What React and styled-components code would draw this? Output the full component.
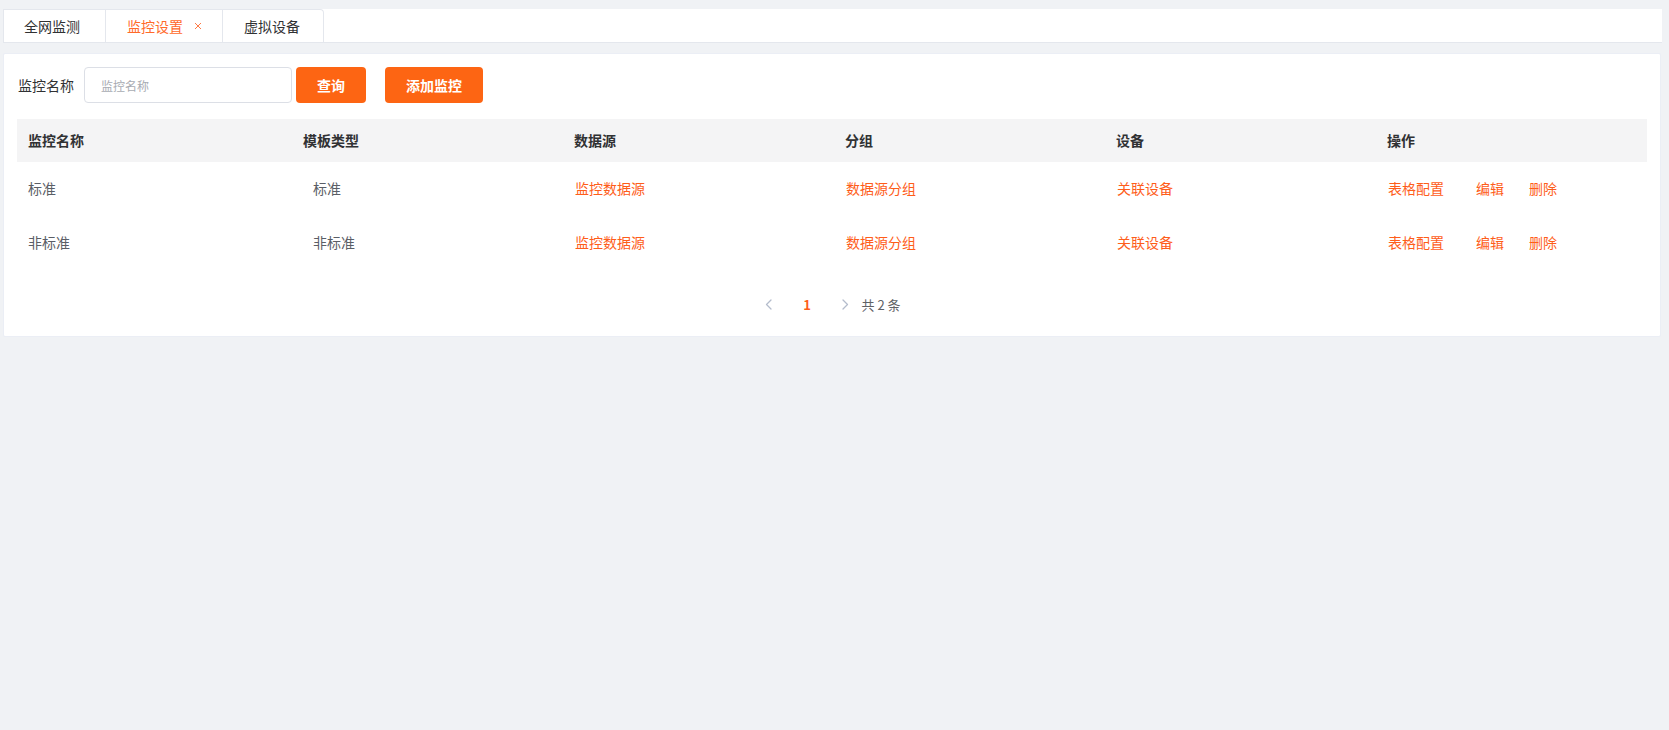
import React from "react";
import styled, { createGlobalStyle } from "styled-components";

const GlobalStyle = createGlobalStyle`
  html, body { margin: 0; padding: 0; height: 100%; background: #f0f2f5; }
  body { font-family: "Noto Sans CJK SC", "Noto Sans", sans-serif; font-size: 14px; color: #303133; }
  #root { min-height: 100%; }
  * { box-sizing: border-box; }
`;

const ORANGE = "#fd6513";
const LINK = "#fe5d1a";

const Page = styled.div`
  padding: 9px 7px 0 3px;
  min-height: 730px;
  background: #f0f2f5;
`;

const TabBar = styled.div`
  display: flex;
  height: 34px;
  background: #fff;
  border-bottom: 1px solid #e4e7ed;
`;

const TabNav = styled.div`
  display: flex;
  border: 1px solid #e4e7ed;
  border-bottom: none;
  border-radius: 0 4px 0 0;
`;

const Tab = styled.div`
  display: flex;
  align-items: center;
  height: 33px;
  padding: 0 ${(p) => p.$pr}px 1px ${(p) => p.$pl}px;
  border-left: ${(p) => (p.$first ? "none" : "1px solid #e4e7ed")};
  color: ${(p) => (p.$active ? "#ff6a2a" : "#303133")};
  font-size: 14px;
  line-height: 1;
  white-space: nowrap;
`;

const Close = styled.span`
  display: inline-flex;
  margin-left: 11px;
  width: 8px;
  height: 8px;
`;

const Card = styled.div`
  margin: 10px 1px 0 0;
  background: #fff;
  border: 1px solid #ebeef5;
  border-radius: 2px;
  padding: 13px 13px 18px 13px;
`;

const FormRow = styled.div`
  display: flex;
  align-items: center;
  height: 36px;
`;

const Label = styled.label`
  width: 67px;
  padding-left: 1px;
  font-size: 14px;
  color: #303133;
  white-space: nowrap;
`;

const Input = styled.input`
  width: 208px;
  height: 36px;
  border: 1px solid #dcdfe6;
  border-radius: 4px;
  padding: 0 16px;
  font-family: inherit;
  font-size: 12px;
  color: #606266;
  outline: none;
  &::placeholder { color: #a8abb2; }
`;

const Button = styled.button`
  height: 36px;
  width: ${(p) => p.$w}px;
  margin-left: ${(p) => p.$ml}px;
  border: none;
  border-radius: 4px;
  background: ${ORANGE};
  color: #fff;
  font-family: inherit;
  font-size: 14px;
  font-weight: 700;
  cursor: pointer;
  padding: 0;
`;

const Table = styled.div`
  margin-top: 16px;
  display: grid;
  grid-template-columns: 275px repeat(5, 1fr);
`;

const HeadCell = styled.div`
  height: 43px;
  display: flex;
  align-items: center;
  padding-left: 11px;
  padding-bottom: 1px;
  background: #f4f4f5;
  font-weight: 700;
  font-size: 14px;
  color: #303133;
`;

const Cell = styled.div`
  height: 54px;
  display: flex;
  align-items: center;
  padding-left: ${(p) => p.$pl || 12}px;
  padding-bottom: 2px;
  font-size: 14px;
  color: ${(p) => (p.$link ? LINK : "#5a5e66")};
`;

const Link = styled.span`
  color: ${LINK};
  margin-right: ${(p) => p.$mr || 0}px;
  cursor: pointer;
  white-space: nowrap;
`;

const Pager = styled.div`
  margin-top: 20px;
  height: 28px;
  display: flex;
  align-items: center;
  justify-content: center;
  padding-right: 10px;
`;

const PagerBtn = styled.span`
  width: 30px;
  height: 28px;
  display: flex;
  align-items: center;
  justify-content: center;
`;

const PageNum = styled.span`
  width: 31px;
  height: 28px;
  margin: 0 8px;
  display: flex;
  align-items: center;
  justify-content: center;
  color: ${LINK};
  font-weight: 700;
  font-size: 13px;
`;

const Total = styled.span`
  margin-left: 1px;
  font-size: 13px;
  color: #606266;
  white-space: nowrap;
`;

const Chevron = ({ dir }) => (
  <svg width="7" height="11" viewBox="0 0 7 11" fill="none">
    <path
      d={dir === "left" ? "M6 1 L1.5 5.5 L6 10" : "M1 1 L5.5 5.5 L1 10"}
      stroke="#b4bccc"
      strokeWidth="1.3"
      strokeLinecap="round"
      strokeLinejoin="round"
    />
  </svg>
);

const rows = [
  { name: "标准", type: "标准" },
  { name: "非标准", type: "非标准" },
];

export default function App() {
  return (
    <>
      <GlobalStyle />
      <Page>
        <TabBar>
          <TabNav>
            <Tab $first $pl={20} $pr={25}>全网监测</Tab>
            <Tab $active $pl={21} $pr={20}>
              监控设置
              <Close>
                <svg width="8" height="8" viewBox="0 0 8 8">
                  <path d="M1 1 L7 7 M7 1 L1 7" stroke="#ff7a45" strokeWidth="1" />
                </svg>
              </Close>
            </Tab>
            <Tab $pl={21} $pr={23}>虚拟设备</Tab>
          </TabNav>
        </TabBar>
        <Card>
          <FormRow>
            <Label>监控名称</Label>
            <Input placeholder="监控名称" />
            <Button $w={70} $ml={4}>查询</Button>
            <Button $w={98} $ml={19}>添加监控</Button>
          </FormRow>
          <Table>
            <HeadCell>监控名称</HeadCell>
            <HeadCell>模板类型</HeadCell>
            <HeadCell>数据源</HeadCell>
            <HeadCell>分组</HeadCell>
            <HeadCell>设备</HeadCell>
            <HeadCell>操作</HeadCell>
            {rows.map((r) => (
              <React.Fragment key={r.name}>
                <Cell $pl={11}>{r.name}</Cell>
                <Cell $pl={21}>{r.type}</Cell>
                <Cell $link>监控数据源</Cell>
                <Cell $link>数据源分组</Cell>
                <Cell $link>关联设备</Cell>
                <Cell>
                  <Link $mr={32}>表格配置</Link>
                  <Link $mr={25}>编辑</Link>
                  <Link>删除</Link>
                </Cell>
              </React.Fragment>
            ))}
          </Table>
          <Pager>
            <PagerBtn><Chevron dir="left" /></PagerBtn>
            <PageNum>1</PageNum>
            <PagerBtn><Chevron dir="right" /></PagerBtn>
            <Total>共 2 条</Total>
          </Pager>
        </Card>
      </Page>
    </>
  );
}
